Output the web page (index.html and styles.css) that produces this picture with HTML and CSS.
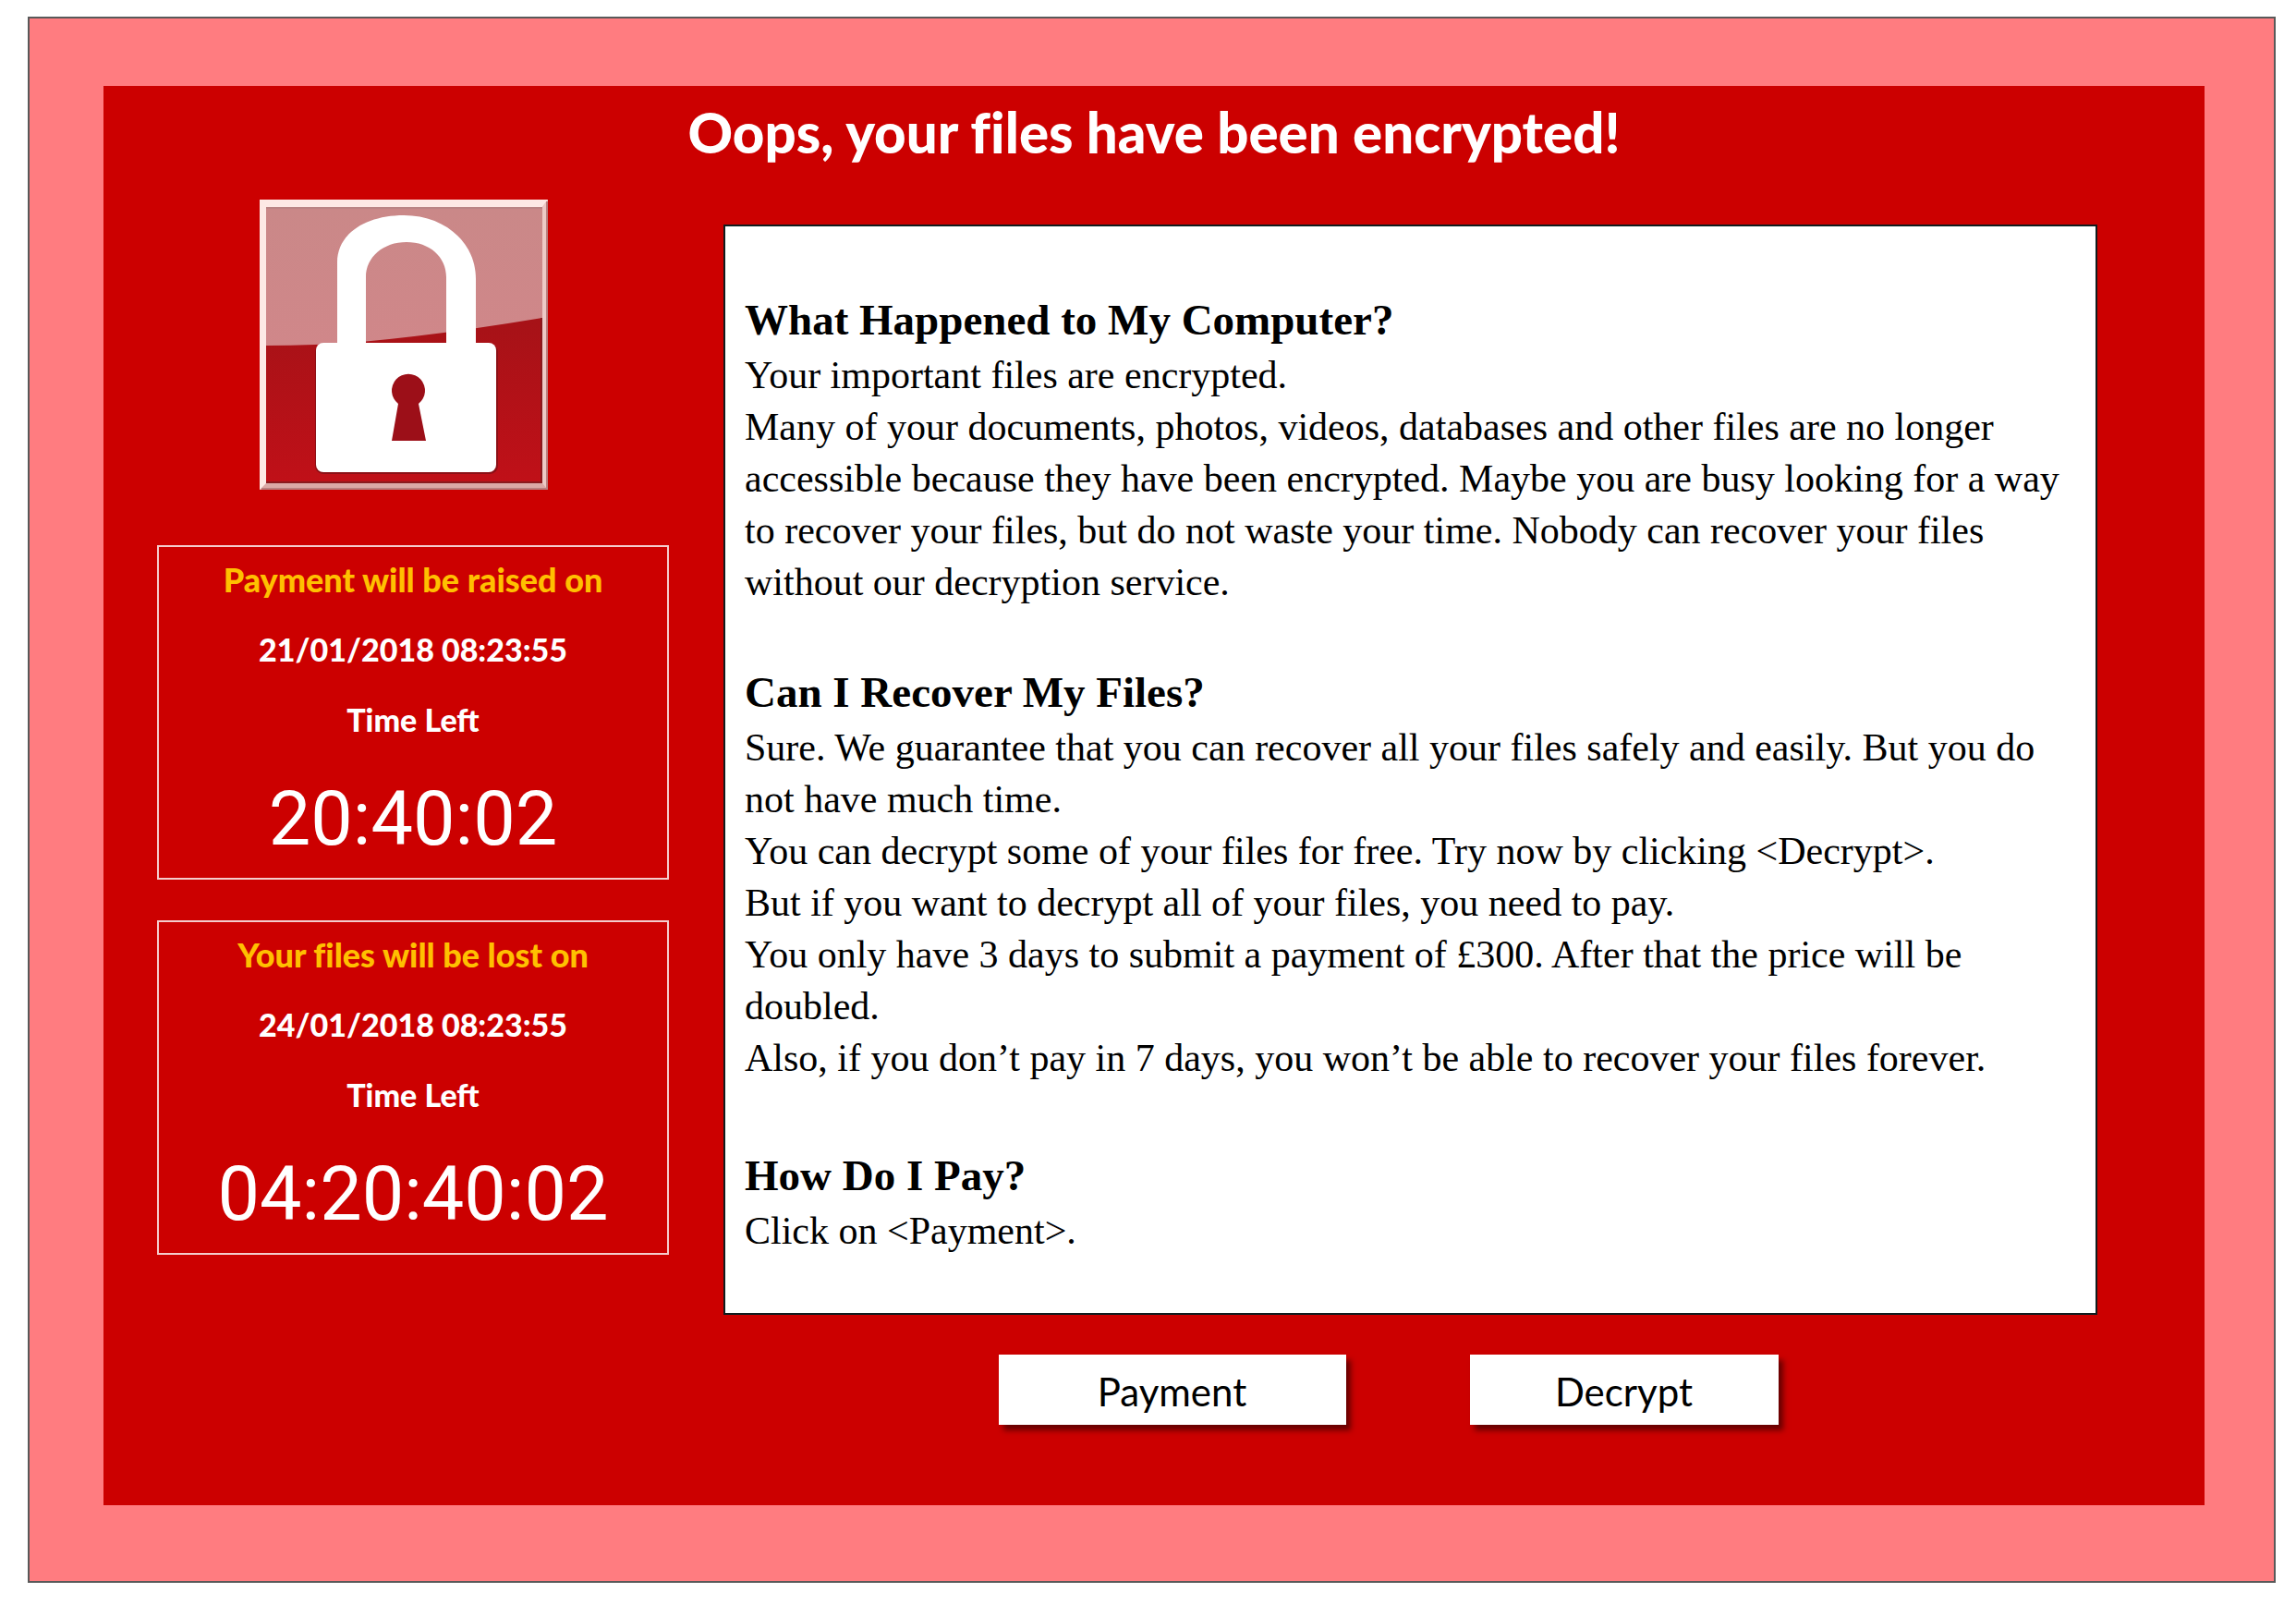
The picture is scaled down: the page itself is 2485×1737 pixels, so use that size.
FILE: index.html
```html
<!DOCTYPE html>
<html lang="en">
<head>
    <meta charset="UTF-8">
    <meta name="viewport" content="width=device-width, initial-scale=1.0">
    <title>Oops, your files have been encrypted!</title>
    <link rel="stylesheet" href="styles.css">
</head>
<body>

<div class="window">
    <main class="panel">
        <h1>Oops, your files have been encrypted!</h1>

        <div class="columns">
            <aside class="sidebar">
                <svg class="lock" viewBox="0 0 312 314" role="img" aria-label="Padlock">
                    <defs>
                        <linearGradient id="light" x1="0" y1="0" x2="0" y2="1">
                            <stop offset="0" stop-color="#ca8888"/>
                            <stop offset="1" stop-color="#d6868b"/>
                        </linearGradient>
                        <linearGradient id="dark" x1="0" y1="0" x2="0" y2="1">
                            <stop offset="0" stop-color="#a61217"/>
                            <stop offset="1" stop-color="#c01018"/>
                        </linearGradient>
                    </defs>
                    <rect width="312" height="314" fill="#fde9e5"/>
                    <path d="M312 0V314H0L7 307H306V8z" fill="#dba9a7"/>
                    <path d="M306 8L312 0V314L306 307z" fill="#edc9c5"/>
                    <path d="M311 2V313H2" fill="none" stroke="#b98080" stroke-width="2"/>
                    <rect x="7" y="8" width="299" height="299" fill="url(#light)"/>
                    <path d="M7 158Q60 158 110 154Q205 145 306 128V307H7z" fill="url(#dark)"/>
                    <path d="M7 306H306M305 128V306" fill="none" stroke="#8a1a1e" stroke-width="2"/>
                    <path d="M7 9H306" stroke="#b98484" stroke-width="2"/>
                    <rect x="60" y="156" width="198" height="141" rx="9" fill="#8c1016"/>
                    <path d="M84 160V68C84 36 116 17 156 17C200 17 234 46 234 86V160H202V84C202 62 184 46 159 46C134 46 115 62 115 84V160z" fill="#fff"/>
                    <rect x="61" y="155" width="195" height="140" rx="8" fill="#fff"/>
                    <path d="M150 221A18 18 0 1 1 172 221L180 261H143z" fill="#9c0f18"/>
                </svg>

                <section class="timer">
                    <h2>Payment will be raised on</h2>
                    <p>21/01/2018 08:23:55</p>
                    <p>Time Left</p>
                    <div class="countdown">20:40:02</div>
                </section>

                <section class="timer">
                    <h2>Your files will be lost on</h2>
                    <p>24/01/2018 08:23:55</p>
                    <p>Time Left</p>
                    <div class="countdown">04:20:40:02</div>
                </section>
            </aside>

            <div class="content">
                <article class="note">
                    <h3>What Happened to My Computer?</h3>
                    <p>
                        Your important files are encrypted.<br>
                        Many of your documents, photos, videos, databases and other files are no longer<br>
                        accessible because they have been encrypted. Maybe you are busy looking for a way<br>
                        to recover your files, but do not waste your time. Nobody can recover your files<br>
                        without our decryption service.
                    </p>

                    <h3>Can I Recover My Files?</h3>
                    <p>
                        Sure. We guarantee that you can recover all your files safely and easily. But you do<br>
                        not have much time.<br>
                        You can decrypt some of your files for free. Try now by clicking &lt;Decrypt&gt;.<br>
                        But if you want to decrypt all of your files, you need to pay.<br>
                        You only have 3 days to submit a payment of £300. After that the price will be<br>
                        doubled.<br>
                        Also, if you don’t pay in 7 days, you won’t be able to recover your files forever.
                    </p>

                    <h3>How Do I Pay?</h3>
                    <p>Click on &lt;Payment&gt;.</p>
                </article>

                <div class="buttons">
                    <button type="button" class="payment">Payment</button>
                    <button type="button" class="decrypt">Decrypt</button>
                </div>
            </div>
        </div>
    </main>
</div>

</body>
</html>
```
FILE: styles.css
```css
* {
    box-sizing: border-box;
}

body {
    margin: 0;
    padding: 18px 22px 24px 30px;
    min-height: 100vh;
    display: flex;
    background-color: white;
    font-family: Lato, Calibri, sans-serif;
}

h1, h2, h3, p {
    margin: 0;
}

.window {
    flex: 1;
    display: flex;
    padding: 73px 75px 82px 80px;
    background-color: #ff7c80;
    border: 2px solid #595959;
}

.panel {
    flex: 1;
    padding: 10px 116px 0 58px;
    background-color: #cc0000;
}

h1 {
    margin-right: -58px;
    color: white;
    font-size: 60px;
    font-weight: 900;
    font-variant-ligatures: none;
    line-height: 80px;
    text-align: center;
}

.columns {
    display: grid;
    grid-template-columns: 554px 1fr;
    gap: 59px;
    margin-top: 33px;
}

.lock {
    display: block;
    width: 312px;
    height: 314px;
    margin: 0 0 60px 111px;
}

.timer {
    height: 362px;
    margin-bottom: 44px;
    padding-top: 11px;
    border: 2px solid #f4cccc;
    color: white;
    text-align: center;
}

.timer h2, .timer p {
    margin-bottom: 28px;
    font-size: 34px;
    font-weight: 900;
    line-height: 48px;
}

.timer h2 {
    color: #ffc000;
    font-size: 36px;
    font-variant-ligatures: none;
}

.countdown {
    font-family: Roboto, sans-serif;
    font-size: 81px;
    line-height: 112px;
}

.content {
    padding-top: 27px;
}

.note {
    padding: 69px 21px 61px;
    background-color: white;
    border: 2px solid #101c1e;
    color: black;
    font-family: "Book Antiqua", Palatino, "Liberation Serif", serif;
}

.note h3 {
    font-size: 47px;
    line-height: 64px;
}

.note p {
    font-size: 42px;
    line-height: 56px;
    white-space: nowrap;
}

.note p + h3 {
    margin-top: 59px;
}

.note h3:last-of-type {
    margin-top: 67px;
}

.buttons {
    display: flex;
    justify-content: center;
    gap: 134px;
    margin-top: 43px;
    padding-right: 48px;
}

button {
    height: 76px;
    padding: 4px 0 0;
    background-color: white;
    border: none;
    box-shadow: 5px 6px 6px rgba(0, 0, 0, 0.5);
    color: black;
    font-family: Lato, Calibri, sans-serif;
    font-size: 42px;
    cursor: pointer;
}

.payment {
    width: 376px;
}

.decrypt {
    width: 334px;
}
```
